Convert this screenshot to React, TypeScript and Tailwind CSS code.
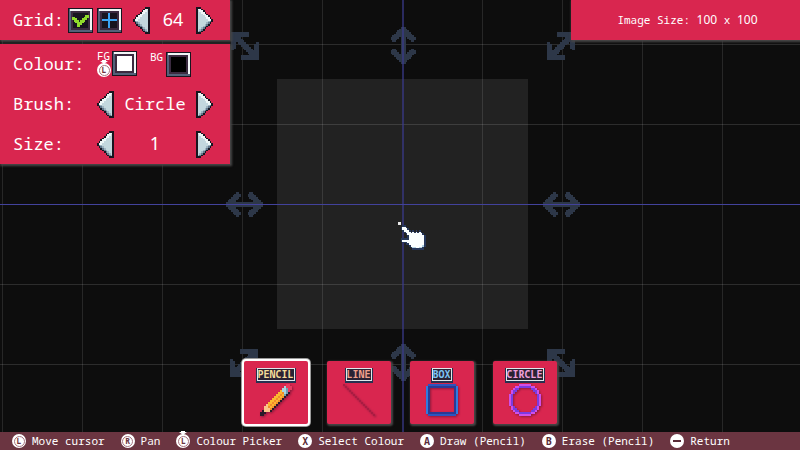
import { useState, type ReactNode } from "react";

type Palette = Record<string, string>;

/** Turns rows of characters into coloured one-unit squares. */
function Pixels({ rows, palette, x = 0, y = 0, size = 1 }: { rows: string[]; palette: Palette; x?: number; y?: number; size?: number }) {
  return (
    <g transform={`translate(${x} ${y}) scale(${size})`} shapeRendering="crispEdges">
      {rows.flatMap((row, r) =>
        [...row].map((ch, c) =>
          palette[ch] ? <rect key={`${r}-${c}`} x={c} y={r} width={1} height={1} fill={palette[ch]} /> : null,
        ),
      )}
    </g>
  );
}

const build = (w: number, h: number, pick: (x: number, y: number) => string) =>
  Array.from({ length: h }, (_, y) => Array.from({ length: w }, (_, x) => pick(x, y)).join(""));

const horizontalArrow = build(22, 15, (x, y) => {
  const d = Math.abs(y - 7);
  const e = Math.min(x, 21 - x);
  if (d <= 1 && e >= d) return "a";
  if (d === 7) return e >= 6 && e <= 7 ? "a" : ".";
  return e >= Math.max(0, d - 1) && e <= Math.min(8, d + 3) ? "a" : ".";
});

const verticalArrow = build(15, 22, (x, y) => horizontalArrow[x][y]);

const diagonalArrow = build(17, 17, (x, y) => {
  const head = (a: number, b: number) => (a < 2 && b < 11) || (b < 3 && a < 11) || (a < 3 && b < 10);
  const corner = x + y < 8 || 32 - x - y < 8;
  return head(x, y) || head(16 - x, 16 - y) || corner || Math.abs(x - y) <= 2 ? "a" : ".";
});

const diagonalArrowFlipped = diagonalArrow.map((row) => [...row].reverse().join(""));

const stepArrow = build(10, 16, (x, y) => {
  const d = Math.min(y, 15 - y);
  const left = 7 - d;
  if (x < left) return ".";
  if (x === left || x === 9 || d === 0) return "k";
  if (y < 8) return x - left <= 2 ? "w" : "l";
  if (x - left <= 1) return "d";
  return x - left <= 2 ? "m" : "l";
});

const stepArrowFlipped = stepArrow.map((row) => [...row].reverse().join(""));

const stepPalette: Palette = { k: "#17151f", w: "#eef6f6", l: "#c3d8de", m: "#9db4c0", d: "#61788c" };

const pencil = [
  ".............pp.",
  "............cppp",
  "...........ccbpp",
  "..........yccbp.",
  ".........yyocbk.",
  "........yyoybk..",
  ".......yyoyok...",
  "......yyoyok....",
  ".....yyoyok.....",
  "....yyoyok......",
  "...fyoyok.......",
  "..ffoyok........",
  "..fffok.........",
  ".kfffk..........",
  "kkk.............",
  "kk..............",
];

const line = build(16, 16, (x, y) => (x === y ? "r" : "."));

const box = build(16, 16, (x, y) => {
  const e = Math.min(x, y, 15 - x, 15 - y);
  const corner = (x === 0 || x === 15) && (y === 0 || y === 15);
  if (corner) return ".";
  if (e === 0) return x === 0 || x === 15 ? "a" : "b";
  return e === 1 ? "c" : ".";
});

const circle = build(16, 16, (x, y) => {
  const r = Math.hypot(x - 7.5, y - 7.5);
  if (r > 8.2 || r < 6.2) return ".";
  return r > 7.2 ? "a" : "b";
});

const hand = [
  ".oo.............",
  "owwo............",
  "owwwo...........",
  ".owwwo.o.o.o....",
  "..owwwowowowo...",
  "...owwwwwwwwwo..",
  "....owwwwwwwwwo.",
  "....owwwwwwwwwo.",
  "ooooowwwwwwwwwo.",
  "owwwwwwwwwwwwwo.",
  ".ooowwwwwwwwwwo.",
  "...oowwwwwwwwwo.",
  ".....owwwwwwwco.",
  "......occwwcco..",
  ".......ooooooo..",
];

const tick = [
  "........gg",
  "gg.....ggg",
  "ggg...ggg.",
  ".ggg.ggg..",
  "..ggggg...",
  "...ggg....",
  "...gg.....",
];

function Canvas() {
  const arrow = { a: "#2d3748" };
  const cell = 5 / 3;
  return (
    <svg className="absolute inset-0 h-full w-full" viewBox="0 0 800 450" preserveAspectRatio="xMidYMid slice" aria-hidden="true">
      <rect x="277" y="79" width="251" height="250" fill="#222222" />
      {[2, 82, 162, 242, 322, 482, 562, 642, 722].map((x) => (
        <rect key={x} x={x} y="0" width="1" height="450" fill="#ffffff" opacity="0.11" />
      ))}
      {[44, 124, 284, 364].map((y) => (
        <rect key={y} x="0" y={y} width="800" height="1" fill="#ffffff" opacity="0.13" />
      ))}
      <Pixels rows={verticalArrow} palette={arrow} x={390.5} y={27} size={cell} />
      <Pixels rows={verticalArrow} palette={arrow} x={390.5} y={344} size={cell} />
      <Pixels rows={horizontalArrow} palette={arrow} x={226} y={192} size={cell} />
      <Pixels rows={horizontalArrow} palette={arrow} x={543} y={192} size={cell} />
      <Pixels rows={diagonalArrow} palette={arrow} x={231} y={32} size={cell} />
      <Pixels rows={diagonalArrowFlipped} palette={arrow} x={547} y={32} size={cell} />
      <Pixels rows={diagonalArrowFlipped} palette={arrow} x={230} y={349} size={cell} />
      <Pixels rows={diagonalArrow} palette={arrow} x={547} y={349} size={cell} />
      <rect x="402" y="0" width="2" height="450" fill="#3a3a8c" opacity="0.65" />
      <rect x="0" y="204" width="800" height="1" fill="#42429c" />
      <rect x="398" y="222" width="3" height="3" fill="#e8e8e8" />
      <Pixels rows={hand} palette={{ o: "#26375a", w: "#fbffff", c: "#b4d3e4" }} x={400.5} y={225} size={cell} />
    </svg>
  );
}

function Panel({ children, className = "" }: { children: ReactNode; className?: string }) {
  return <section className={`bg-[#d9264f] shadow-[1px_1px_2px_1px_#474747] ${className}`}>{children}</section>;
}

function Digits({ children, className = "" }: { children: ReactNode; className?: string }) {
  return <span className={`font-['Noto_Sans',sans-serif] ${className}`}>{children}</span>;
}

function Frame({ fill, children }: { fill: string; children?: ReactNode }) {
  return (
    <svg className="block size-[25px]" viewBox="0 0 25 25" shapeRendering="crispEdges" aria-hidden="true">
      <rect width="25" height="25" rx="1" fill="#17151f" />
      <rect x="1" y="1" width="23" height="23" fill="#536179" />
      <path d="M2 1H24V22H22V3H2z" fill="#f2f6f7" />
      <rect x="3" y="3" width="19" height="19" fill="#3b2b40" />
      <rect x="5" y="5" width="15" height="15" fill={fill} />
      {children}
    </svg>
  );
}

function StepButton({ direction, label }: { direction: "left" | "right"; label: string }) {
  return (
    <button type="button" aria-label={label} className="block">
      <svg className="block h-[27px] w-[17px]" viewBox="0 0 10 16" aria-hidden="true">
        <Pixels rows={direction === "left" ? stepArrow : stepArrowFlipped} palette={stepPalette} />
      </svg>
    </button>
  );
}

function Stepper({ name, value, className }: { name: string; value: ReactNode; className: string }) {
  return (
    <div className={`flex items-center justify-between ${className}`}>
      <StepButton direction="left" label={`Previous ${name}`} />
      <output aria-label={name}>{value}</output>
      <StepButton direction="right" label={`Next ${name}`} />
    </div>
  );
}

function Row({ label, children }: { label: string; children: ReactNode }) {
  return (
    <div className="flex h-10 items-center justify-between pr-[17px] pl-[13px]">
      <span>{label}</span>
      {children}
    </div>
  );
}

function StickIcon({ letter, pressed = false }: { letter: string; pressed?: boolean }) {
  return (
    <span className="relative flex size-[14px] shrink-0 items-center justify-center rounded-full bg-white text-[8px] leading-none font-bold text-[#6b3541]">
      <span className="flex size-[11px] items-center justify-center rounded-full border border-[#a5747f]">{letter}</span>
      {pressed && (
        <svg className="absolute -top-[3px] left-[3px] h-1 w-2" viewBox="0 0 8 4" aria-hidden="true">
          <path d="M0 1h2V0h4v1h2L4 4z" fill="#ffffff" />
        </svg>
      )}
    </span>
  );
}

function ButtonIcon({ children }: { children: ReactNode }) {
  return (
    <span className="flex size-[14px] items-center justify-center rounded-full bg-white text-[10px] leading-none font-bold text-[#5a2c38]">
      {children}
    </span>
  );
}

function GridPanel() {
  const [shown, setShown] = useState(true);
  return (
    <Panel>
      <div className="flex h-10 items-center gap-1 pr-[17px] pl-[13px]">
        <span>Grid:</span>
        <label className="relative block size-[25px]">
          <Frame fill="#17151f">
            {shown && <Pixels rows={tick} palette={{ g: "#8fdc2c" }} x={4} y={7} size={5 / 3} />}
          </Frame>
          <input
            type="checkbox"
            aria-label="Show grid"
            checked={shown}
            onChange={(e) => setShown(e.target.checked)}
            className="absolute inset-0 appearance-none"
          />
        </label>
        <button type="button" aria-label="Centre lines" className="block">
          <Frame fill="#17151f">
            <path d="M11 5h2v6h7v2h-7v7h-2v-7H5v-2h6z" fill="#3aa4f4" />
          </Frame>
        </button>
        <Stepper name="grid size" value={<Digits className="text-[18px] leading-6">64</Digits>} className="ml-auto w-[80px]" />
      </div>
    </Panel>
  );
}

function BrushPanel() {
  return (
    <Panel>
      <Row label="Colour:">
        <div className="flex w-[116px] items-center gap-[13px]">
          <button type="button" aria-label="Foreground colour" className="flex items-start gap-0.5">
            <span className="flex w-[13px] flex-col gap-0.5 text-[11px] leading-[10px]">
              FG
              <StickIcon letter="L" pressed />
            </span>
            <Frame fill="#ffffff" />
          </button>
          <button type="button" aria-label="Background colour" className="flex items-start gap-[3px]">
            <span className="w-[13px] text-[11px] leading-[10px]">BG</span>
            <Frame fill="#000000" />
          </button>
        </div>
      </Row>
      <Row label="Brush:">
        <Stepper name="brush" value="Circle" className="w-[116px]" />
      </Row>
      <Row label="Size:">
        <Stepper name="size" value={<Digits className="text-[18px] leading-6">1</Digits>} className="w-[116px]" />
      </Row>
    </Panel>
  );
}

const tools = [
  { name: "PENCIL", color: "text-[#f3dc9a]", rows: pencil, palette: { p: "#e8395f", c: "#a9d6e0", b: "#6f9fb5", y: "#fbb82f", o: "#f08a2c", f: "#fbc58a", k: "#2a1a28" } },
  { name: "LINE", color: "text-[#f0a08c]", rows: line, palette: { r: "#a81c42" } },
  { name: "BOX", color: "text-[#7cc4f2]", rows: box, palette: { a: "#2f7be0", b: "#2c55c0", c: "#2b3a94" } },
  { name: "CIRCLE", color: "text-[#f0a0dc]", rows: circle, palette: { a: "#cf4fe8", b: "#7a3be0" } },
];

function Toolbar() {
  const [active, setActive] = useState("PENCIL");
  return (
    <div role="group" aria-label="Tools" className="flex justify-center gap-[19px] pb-2">
      {tools.map((tool) => (
        <button
          key={tool.name}
          type="button"
          aria-pressed={active === tool.name}
          onClick={() => setActive(tool.name)}
          className={`flex h-[63px] w-16 flex-col items-center rounded-xs bg-[#d9264f] pt-[7px] ${
            active === tool.name ? "shadow-[0_0_0_2px_#ffffff,0_0_0_3px_#999999]" : "shadow-[1px_1px_2px_1px_#474747]"
          }`}
        >
          <span
            className={`mb-[3px] border border-[#dfe9ec] bg-[#2a2233] text-[10px] leading-[11px] font-bold shadow-[0_1px_0_1px_#26304f] ${tool.color}`}
          >
            {tool.name}
          </span>
          <svg className="size-8 drop-shadow-[1px_1px_1px_#8d1a3c]" viewBox="0 0 16 16" aria-hidden="true">
            <Pixels rows={tool.rows} palette={tool.palette} />
          </svg>
        </button>
      ))}
    </div>
  );
}

const hints: { icon: ReactNode; text: string }[] = [
  { icon: <StickIcon letter="L" />, text: "Move cursor" },
  { icon: <StickIcon letter="R" />, text: "Pan" },
  { icon: <StickIcon letter="L" pressed />, text: "Colour Picker" },
  { icon: <ButtonIcon>X</ButtonIcon>, text: "Select Colour" },
  { icon: <ButtonIcon>A</ButtonIcon>, text: "Draw (Pencil)" },
  { icon: <ButtonIcon>B</ButtonIcon>, text: "Erase (Pencil)" },
  { icon: <ButtonIcon><span className="h-0.5 w-2 bg-[#5a2c38]" /></ButtonIcon>, text: "Return" },
];

export default function App() {
  return (
    <div className="relative flex min-h-screen flex-col overflow-hidden bg-[#0d0d0d] font-['Noto_Sans_Mono','DejaVu_Sans_Mono',monospace] text-[17px] text-white">
      <Canvas />
      <header className="relative flex items-start justify-between">
        <div className="flex w-[230px] flex-col gap-1">
          <GridPanel />
          <BrushPanel />
        </div>
        <Panel className="flex h-10 w-[229px] items-center justify-center pl-1 text-[11px]">
          <p>
            Image Size: <Digits className="text-xs">100</Digits> x <Digits className="text-xs">100</Digits>
          </p>
        </Panel>
      </header>
      <main className="relative mt-auto">
        <Toolbar />
      </main>
      <footer className="relative flex h-[18px] items-center gap-4 bg-[#6b3541] px-3 text-[11px] whitespace-nowrap">
        {hints.map((hint) => (
          <span key={hint.text} className="flex items-center gap-1.5">
            {hint.icon}
            {hint.text}
          </span>
        ))}
      </footer>
    </div>
  );
}
